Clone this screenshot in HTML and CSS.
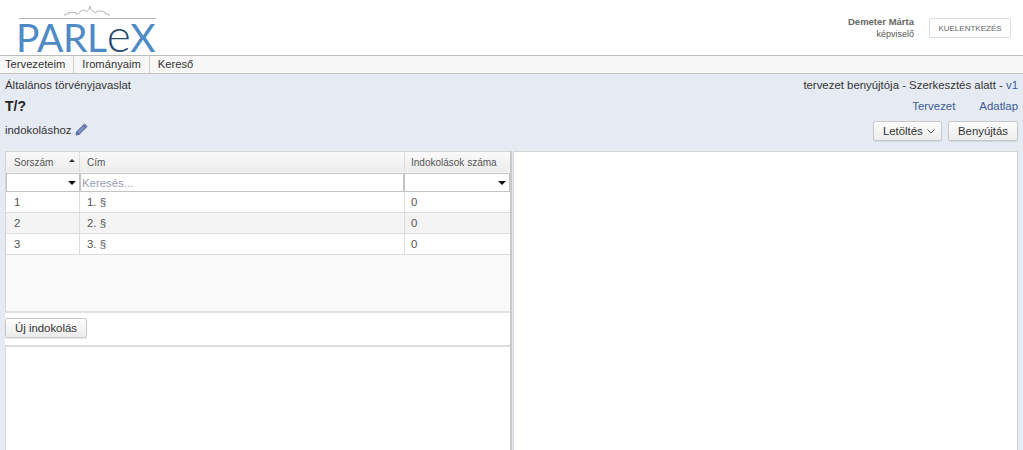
FILE: index.html
```html
<!DOCTYPE html>
<html lang="hu">
<head>
<meta charset="utf-8">
<title>Parlex</title>
<link rel="stylesheet" href="styles.css">
</head>
<body>
<header class="top">
  <div class="logo">
    <svg class="skyline" width="137" height="17" viewBox="0 0 137 17">
      <path class="sky-roof" d="M46 13V11H50V9.500H57V11H59L62 8 65 7 68 8.500 70 6 71 3 72 7 77 10 78 8 81 8 86 9V11H90V13"/>
      <path class="sky-line" d="M0 15.500H137"/>
    </svg>
    <div class="wordmark">PARL<span class="wm-e">e</span>X</div>
  </div>
  <div class="user">
    <div class="user-text">
      <div class="user-name">Demeter Márta</div>
      <div class="user-role">képviselő</div>
    </div>
    <button class="logout">KUELENTKEZÉS</button>
  </div>
</header>
<nav class="menu">
  <a class="menu-item">Tervezeteim</a>
  <a class="menu-item">Irományaim</a>
  <a class="menu-item">Kereső</a>
</nav>
<main class="page">
  <div class="row row-meta">
    <span>Általános törvényjavaslat</span>
    <span>tervezet benyújtója - Szerkesztés alatt - <a class="link">v1</a></span>
  </div>
  <div class="row row-title">
    <h1 class="title">T/?</h1>
    <div class="tabs"><a class="link">Tervezet</a><a class="link">Adatlap</a></div>
  </div>
  <div class="row row-actions">
    <div class="subject">indokoláshoz
      <svg class="pencil" width="13" height="13" viewBox="0 0 13 13"><path d="M9.500 1 12 3.500 4.200 11.300 1 12 1.700 8.800Z"/><path d="M8.200 2.300 10.700 4.800M2 8.800 4.200 11"/></svg>
    </div>
    <div class="actions">
      <button class="btn btn-menu">Letöltés <svg class="chev" width="8" height="5" viewBox="0 0 8 5"><path d="M0.500 0.500 4 4 7.500 0.500"/></svg></button>
      <button class="btn">Benyújtás</button>
    </div>
  </div>
  <div class="panes">
    <section class="left">
      <div class="grid">
        <div class="grid-row grid-head">
          <div class="cell c1 head-sort">Sorszám<span class="sort-up"></span></div>
          <div class="cell c2">Cím</div>
          <div class="cell c3">Indokolások száma</div>
        </div>
        <div class="grid-row grid-filter">
          <div class="fcell c1"><span class="drop"></span></div>
          <div class="fcell c2 placeholder">Keresés...</div>
          <div class="fcell c3"><span class="drop"></span></div>
        </div>
        <div class="grid-row data"><div class="cell c1">1</div><div class="cell c2">1. §</div><div class="cell c3">0</div></div>
        <div class="grid-row data alt"><div class="cell c1">2</div><div class="cell c2">2. §</div><div class="cell c3">0</div></div>
        <div class="grid-row data"><div class="cell c1">3</div><div class="cell c2">3. §</div><div class="cell c3">0</div></div>
        <div class="grid-empty"></div>
      </div>
      <div class="toolbar"><button class="btn btn-new">Új indokolás</button></div>
      <div class="editor"></div>
    </section>
    <section class="right"></section>
  </div>
</main>
</body>
</html>
```
FILE: styles.css
```css
* { box-sizing: border-box; }
html, body { margin: 0; height: 450px; overflow: hidden; }
body { font-family: "Liberation Sans", Arial, sans-serif; font-size: 11.4px; color: #333; background: #e6ebf3; display: flex; flex-direction: column; }
.top { height: 55px; background: #fff; display: flex; justify-content: space-between; padding: 0 12px 0 17px; flex: none; }
.logo { width: 142px; padding-top: 3px; }
.skyline { display: block; margin-left: 2px; }
.sky-roof { fill: none; stroke: #a5a8ab; stroke-width: 0.8; }
.sky-line { stroke: #b5b8ba; stroke-width: 1; fill: none; }
.wordmark { font-family: Lato, "Liberation Sans", sans-serif; font-weight: 400; font-size: 39px; line-height: 32px; color: #4f8ac4; letter-spacing: -0.4px; white-space: nowrap; margin-left: -1px; }
.wm-e { color: #25486f; font-weight: 300; font-size: 46px; line-height: 30px; }
.user { display: flex; align-items: flex-start; padding-top: 16px; gap: 15px; }
.user-text { text-align: right; font-size: 9.500px; line-height: 12px; color: #555; }
.user-role { font-size: 9px; }
.user-name { font-weight: bold; color: #666; }
.logout { width: 82px; height: 20px; margin-top: 2px; padding: 0; background: #fff; border: 1px solid #ddd; border-radius: 2px; font: 8px "Liberation Sans", Arial, sans-serif; color: #666; }
.menu { height: 19px; flex: none; display: flex; background: #f7f7f7; border-top: 1px solid #bbb; border-bottom: 1px solid #c4c4c4; font-size: 11.2px; }
.menu-item { padding: 0 8px 0 5px; line-height: 17px; color: #333; border-right: 1px solid #d0d0d0; }
.menu-item + .menu-item { padding: 0 8px; }
.menu-item:last-child { border-right: 0; }
.page { flex: 1; display: flex; flex-direction: column; padding: 0 5px; min-height: 0; }
.row { display: flex; justify-content: space-between; }
.row-meta { height: 22px; align-items: center; }
.row-title { height: 20px; align-items: center; }
.title { margin: 0; font-size: 14px; font-weight: bold; color: #222; }
.link { color: #3c5a96; }
.tabs { display: flex; gap: 24px; }
.row-actions { height: 35px; align-items: flex-start; padding-top: 5px; }
.subject { display: flex; align-items: center; gap: 3px; height: 17px; }
.pencil { fill: #7f8fc2; stroke: #4a5f9c; stroke-width: 1; margin-top: -1px; }
.actions { display: flex; gap: 6px; }
.btn { height: 20px; padding: 0 9px; border: 1px solid #c8c8c8; border-radius: 2px; background: linear-gradient(#fdfdfd, #ececec); font: 11.4px "Liberation Sans", Arial, sans-serif; color: #333; box-shadow: 0 1px 1px rgba(0,0,0,0.08); }
.btn-menu { padding-right: 6px; }
.chev { fill: none; stroke: #555; stroke-width: 1; margin-left: 1px; vertical-align: 1px; }
.panes { flex: 1; display: flex; min-height: 0; gap: 1px; }
.left { width: 507px; flex: none; background: #fff; border-right: 2px solid #c9c9c9; display: flex; flex-direction: column; }
.right { flex: 1; background: #fff; border: 1px solid #d4d4d4; border-bottom: 0; }
.grid { height: 162px; background: #f9f9f9; border: 1px solid #d4d4d4; border-width: 1px 0 2px 1px; border-bottom-color: #e2e2e2; flex: none; }
.grid-row { display: flex; }
.c1 { width: 74px; }
.c2 { width: 325px; }
.c3 { flex: 1; }
.cell { padding: 0 7px; border-right: 1px solid #ddd; display: flex; align-items: center; white-space: nowrap; }
.c3.cell { border-right: 0; padding-left: 6px; }
.grid-head { height: 20px; background: linear-gradient(#fafafa, #ececec); font-size: 10px; color: #555; }
.head-sort { justify-content: space-between; padding-left: 8px; padding-right: 4px; }
.sort-up { width: 0; height: 0; border: 3px solid transparent; border-top: 0; border-bottom: 3px solid #333; margin-bottom: 3px; }
.grid-filter { height: 20px; padding-top: 1px; }
.fcell { background: #fff; border: 1px solid #c4c4c4; height: 19px; display: flex; align-items: center; justify-content: flex-end; padding-right: 3px; }
.fcell.c2 { width: 324px; }
.placeholder { justify-content: flex-start; padding-left: 1px; color: #9a9eb0; }
.drop { width: 0; height: 0; border: 4px solid transparent; border-bottom: 0; border-top: 4px solid #111; }
.data { height: 21px; background: #fff; border-bottom: 1px solid #dcdcdc; color: #555; }
.data .c1 { padding-left: 8px; }
.data.alt { background: #f4f4f4; }
.grid-empty { height: 58px; }
.toolbar { height: 32px; flex: none; padding-top: 5px; }
.btn-new { width: 82px; padding: 0; }
.editor { flex: 1; border: 1px solid #dcdcdc; border-width: 2px 0 0 1px; }
```
